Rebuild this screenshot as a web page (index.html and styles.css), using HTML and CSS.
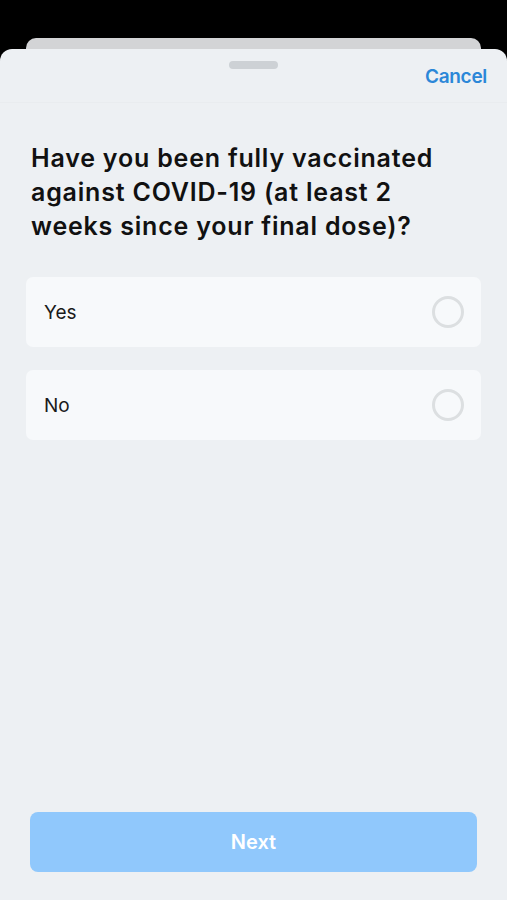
FILE: index.html
```html
<!DOCTYPE html>
<html lang="en">
<head>
    <meta charset="UTF-8">
    <meta name="viewport" content="width=device-width, initial-scale=1.0">
    <title>Vaccination Status</title>
    <link rel="stylesheet" href="styles.css">
</head>
<body>
    <!-- Card peeking behind the sheet -->
    <div class="back-card"></div>

    <div class="sheet">
        <!-- Header -->
        <div class="sheet-header">
            <div class="grabber"></div>
            <a class="cancel" href="#">Cancel</a>
        </div>

        <div class="sheet-body">
            <h1 class="question">Have you been fully vaccinated against COVID-19 (at least 2 weeks since your final dose)?</h1>

            <div class="options">
                <label class="option">
                    <span class="option-label">Yes</span>
                    <span class="radio"></span>
                </label>
                <label class="option">
                    <span class="option-label">No</span>
                    <span class="radio"></span>
                </label>
            </div>
        </div>

        <!-- Footer -->
        <div class="sheet-footer">
            <button class="next-btn" disabled>Next</button>
        </div>
    </div>
</body>
</html>
```

FILE: styles.css
```css
body {
    margin: 0;
    font-family: 'Inter', 'Roboto', sans-serif;
    background-color: #000;
    height: 900px;
    display: flex;
    flex-direction: column;
    overflow: hidden;
}

.back-card {
    margin: 38px 26px 0 26px;
    height: 11px;
    background-color: #d3d4d6;
    border-radius: 10px 10px 0 0;
}

.sheet {
    flex: 1;
    background-color: #edf0f3;
    border-radius: 12px 12px 0 0;
    display: flex;
    flex-direction: column;
}

.sheet-header {
    position: relative;
    height: 53px;
    border-bottom: 1px solid #e9ecef;
}

.grabber {
    position: absolute;
    top: 12px;
    left: 229px;
    width: 49px;
    height: 8px;
    border-radius: 4px;
    background-color: #cdd1d5;
}

.cancel {
    position: absolute;
    right: 20px;
    top: 16px;
    font-size: 19px;
    font-weight: 600;
    letter-spacing: -0.3px;
    color: #2b87d8;
    text-decoration: none;
}

.sheet-body {
    flex: 1;
    padding: 0 26px;
}

.question {
    margin: 38px 5px 34px 5px;
    font-size: 25px;
    line-height: 34px;
    font-weight: 600;
    letter-spacing: 0.8px;
    color: #111;
}

.options {
    display: flex;
    flex-direction: column;
    gap: 23px;
}

.option {
    display: flex;
    align-items: center;
    justify-content: space-between;
    height: 70px;
    padding: 0 17px 0 18px;
    background-color: #f7f9fb;
    border-radius: 7px;
}

.option-label {
    font-size: 19px;
    color: #1a1a1a;
}

.radio {
    width: 26px;
    height: 26px;
    border: 3px solid #dcdfe1;
    border-radius: 50%;
}

.sheet-footer {
    padding: 0 30px 28px 30px;
}

.next-btn {
    width: 100%;
    height: 60px;
    border: none;
    border-radius: 8px;
    background-color: #90c8fc;
    color: #fff;
    font-family: inherit;
    font-size: 20px;
    font-weight: 600;
}
```
